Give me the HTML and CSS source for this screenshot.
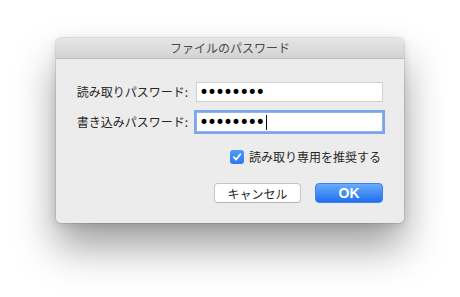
FILE: index.html
```html
<!DOCTYPE html>
<html lang="ja">
<head>
    <meta charset="UTF-8">
    <title>ファイルのパスワード</title>
    <link rel="stylesheet" href="styles.css">
</head>
<body>
    <div class="dialog">
        <div class="titlebar">ファイルのパスワード</div>
        <div class="content">
            <div class="form-grid">
                <label class="field-label">読み取りパスワード:</label>
                <div class="field">••••••••</div>
                <label class="field-label">書き込みパスワード:</label>
                <div class="field focused">••••••••<span class="caret"></span></div>
            </div>

            <div class="check-row">
                <span class="checkbox">
                    <svg width="10" height="10" viewBox="0 0 10 10">
                        <path d="M1.8 5.2 L4.1 7.5 L8.3 2.2" fill="none" stroke="#fff" stroke-width="1.8" stroke-linecap="round" stroke-linejoin="round"/>
                    </svg>
                </span>
                <span class="check-text">読み取り専用を推奨する</span>
            </div>

            <div class="buttons">
                <button class="btn">キャンセル</button>
                <button class="btn primary">OK</button>
            </div>
        </div>
    </div>
</body>
</html>
```

FILE: styles.css
```css
body {
    margin: 0;
    padding: 38px 0 0 56px;
    min-height: 100vh;
    box-sizing: border-box;
    background: #ffffff;
    font-family: "Noto Sans CJK JP", "Noto Sans", sans-serif;
    font-size: 12px;
    color: #262626;
}

.dialog {
    width: 348px;
    height: 185px;
    background: #ececec;
    border-radius: 5px;
    box-shadow: 0 24px 40px rgba(0,0,0,0.38), 0 2px 10px rgba(0,0,0,0.12), 0 0 0 1px rgba(0,0,0,0.08);
    overflow: hidden;
    display: flex;
    flex-direction: column;
}

.titlebar {
    height: 20px;
    line-height: 20px;
    text-align: center;
    color: #4a4a4a;
    background: linear-gradient(#e6e6e6, #d3d3d3);
    border-bottom: 1px solid #bdbdbd;
}

.content {
    padding: 23px 21px 0 0;
}

.form-grid {
    display: grid;
    grid-template-columns: auto 187px;
    justify-content: end;
    column-gap: 8px;
    row-gap: 10px;
    align-items: center;
}

.field-label {
    text-align: right;
    line-height: 20px;
}

.field {
    height: 20px;
    box-sizing: border-box;
    background: #fff;
    border: 1px solid #d0d0d0;
    padding: 0 2px;
    font-family: "DejaVu Sans", sans-serif;
    font-size: 17px;
    line-height: 17px;
    letter-spacing: -2px;
    color: #000;
    display: flex;
    align-items: center;
}

.field.focused {
    border-color: #8eb3ea;
    box-shadow: 0 0 0 2px #7ba6ec;
}

.caret {
    width: 1px;
    height: 15px;
    background: #000;
    margin-left: 3px;
}

.check-row {
    display: flex;
    justify-content: flex-end;
    align-items: center;
    gap: 5px;
    margin-top: 16px;
    margin-right: 2px;
}

.checkbox {
    width: 14px;
    height: 14px;
    border-radius: 3px;
    background: linear-gradient(#4d9bf8, #2a7af0);
    display: flex;
    align-items: center;
    justify-content: center;
}

.buttons {
    display: flex;
    justify-content: flex-end;
    gap: 14px;
    margin-top: 18px;
}

.btn {
    height: 20px;
    width: 87px;
    padding: 0;
    border: 1px solid #c6c6c6;
    border-bottom-color: #b4b4b4;
    border-radius: 4px;
    background: #fff;
    font-family: "Noto Sans CJK JP", "Noto Sans", sans-serif;
    font-size: 12px;
    color: #262626;
    line-height: 17px;
}

.btn.primary {
    width: 68px;
    border-color: #3b82ef;
    background: linear-gradient(#6aacfa, #1f6ff1);
    color: #fff;
    font-family: "Liberation Sans", sans-serif;
    font-size: 14px;
    font-weight: bold;
}
```
